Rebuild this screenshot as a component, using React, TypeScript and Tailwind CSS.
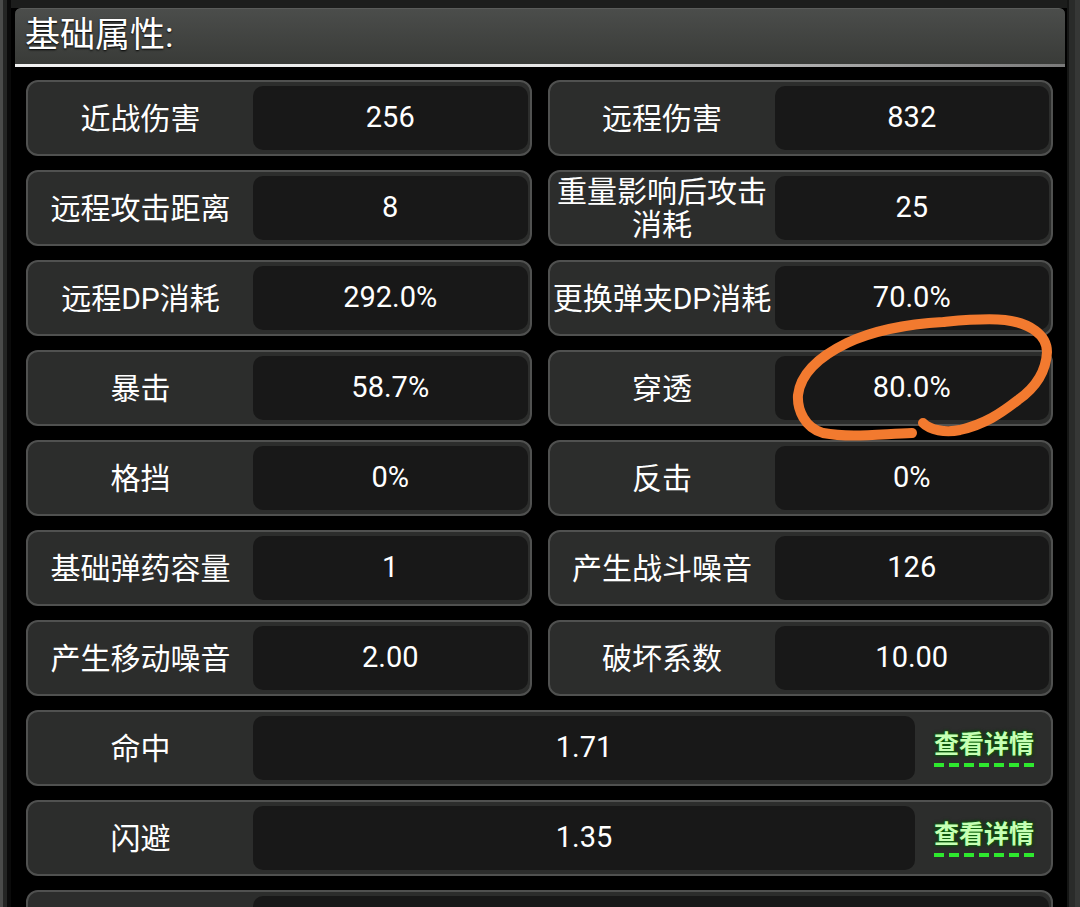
const cjk = "font-['Roboto','Noto_Sans_CJK_SC',sans-serif]"

const pairs: [string, string][][] = [
  [["近战伤害", "256"], ["远程伤害", "832"]],
  [["远程攻击距离", "8"], ["重量影响后攻击消耗", "25"]],
  [["远程DP消耗", "292.0%"], ["更换弹夹DP消耗", "70.0%"]],
  [["暴击", "58.7%"], ["穿透", "80.0%"]],
  [["格挡", "0%"], ["反击", "0%"]],
  [["基础弹药容量", "1"], ["产生战斗噪音", "126"]],
  [["产生移动噪音", "2.00"], ["破坏系数", "10.00"]],
]

const wide = [
  { label: "命中", value: "1.71" },
  { label: "闪避", value: "1.35" },
]

function Card({ label, value, link }: { label: string; value: string; link?: boolean }) {
  return (
    <div className="h-[76px] shrink-0 rounded-[12px] border-2 border-[#505150] bg-[#2c2d2c] flex items-center">
      <div className="w-[225px] shrink-0 text-center text-[30px] leading-[33px] text-white">
        {label}
      </div>
      <div className="flex-1 h-[64px] mr-[2px] rounded-[10px] bg-[#181818] flex items-center justify-center text-[29px] text-white">
        {value}
      </div>
      {link && (
        <div className="w-[134px] shrink-0 flex flex-col items-center">
          <span className="text-[25px] font-bold leading-[30px] text-[#c6ffb4] [text-shadow:0_0_2px_#0d6a0d,0_0_3px_#0d6a0d,0_0_4px_#063806]">
            查看详情
          </span>
          <div className="mt-[3px] flex gap-[5px]">
            {[0, 1, 2, 3, 4, 5, 6].map((i) => (
              <span key={i} className="w-[10px] h-[4px] bg-[#2ee82e]" />
            ))}
          </div>
        </div>
      )}
    </div>
  )
}

export default function App() {
  return (
    <div className={`relative w-[1080px] h-[907px] overflow-hidden flex bg-[#262726] ${cjk}`}>
      {/* left frame */}
      <div className="w-[11px] shrink-0 border-l-[3px] border-[#4a4b4a] bg-[#242524] border-r-[4px] border-r-[#0a0a0a]" />

      {/* main */}
      <div className="w-[1056px] shrink-0 bg-black flex flex-col">
        <div className="h-[8px] shrink-0 bg-[#1c1d1c]" />
        <div className="h-[56px] shrink-0 ml-[4px] mr-[2px] rounded-t-[6px] border-t border-[#5a5c5a] bg-gradient-to-b from-[#4b4d4b] to-[#393b38] flex items-center pl-[10px]">
          <span className="text-[35px] text-white [text-shadow:0_1px_2px_#000]">基础属性:</span>
        </div>
        <div className="h-[3px] shrink-0 ml-[4px] mr-[2px] bg-gradient-to-r from-[#f2f2f2] via-[#e6e6e6] to-[#7a7a7a]" />

        <div className="pt-[13px] pl-[15px] pr-[14px] flex flex-col gap-[14px] shrink-0">
          {pairs.map((row, i) => (
            <div key={i} className="grid grid-cols-2 gap-[16px] shrink-0">
              {row.map(([l, v]) => (
                <Card key={l} label={l} value={v} />
              ))}
            </div>
          ))}
          {wide.map((w) => (
            <Card key={w.label} label={w.label} value={w.value} link />
          ))}
          <Card label="" value="" />
        </div>
      </div>

      {/* right frame */}
      <div className="w-[13px] shrink-0 border-l-[2px] border-[#151615] bg-[#2a2b2a] border-r-[5px] border-r-[#363736]" />

      {/* hand-drawn annotation */}
      <svg className="absolute left-0 top-0 pointer-events-none" width="1080" height="907">
        <path
          d="M912 433 C 880 434, 850 438, 823 433 C 805 428, 797 410, 798 395 C 800 378, 812 360, 847 343 C 870 332, 905 324, 943 322 C 965 320, 985 318, 1005 320 C 1030 323, 1047 335, 1047 352 C 1046 372, 1035 388, 1018 400 C 1000 414, 985 424, 960 430 C 945 433, 930 430, 923 423"
          fill="none"
          stroke="#f27a2f"
          strokeWidth="10"
          strokeLinecap="round"
          strokeLinejoin="round"
        />
      </svg>
    </div>
  )
}
